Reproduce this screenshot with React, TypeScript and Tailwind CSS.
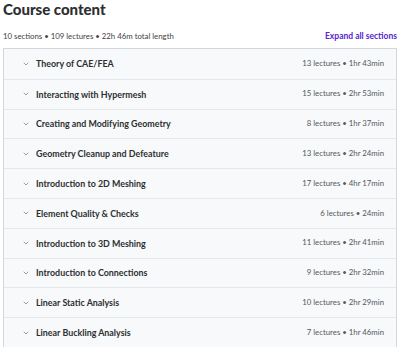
import { ChevronDown } from "lucide-react";

const sections = [
  { title: "Theory of CAE/FEA", info: "13 lectures • 1hr 43min" },
  { title: "Interacting with Hypermesh", info: "15 lectures • 2hr 53min" },
  { title: "Creating and Modifying Geometry", info: "8 lectures • 1hr 37min" },
  { title: "Geometry Cleanup and Defeature", info: "13 lectures • 2hr 24min" },
  { title: "Introduction to 2D Meshing", info: "17 lectures • 4hr 17min" },
  { title: "Element Quality & Checks", info: "6 lectures • 24min" },
  { title: "Introduction to 3D Meshing", info: "11 lectures • 2hr 41min" },
  { title: "Introduction to Connections", info: "9 lectures • 2hr 32min" },
  { title: "Linear Static Analysis", info: "10 lectures • 2hr 29min" },
  { title: "Linear Buckling Analysis", info: "7 lectures • 1hr 46min" },
];

const App = () => {
  return (
    <div className="w-[400px] h-[347px] overflow-hidden bg-white px-[3px] font-['Lato',sans-serif] text-[#2d2f31]">
      <h2 className="text-[15px] font-black leading-[18px] pt-[0px]">Course content</h2>
      <div className="flex items-end justify-between mt-[13px]">
        <span className="text-[7.8px] text-[#3e4143] leading-[11px]">
          10 sections • 109 lectures • 22h 46m total length
        </span>
        <span className="text-[8.5px] font-bold text-[#5624d0] leading-[11px]">Expand all sections</span>
      </div>
      <div className="mt-[6px] border border-[#d1d7dc]">
        {sections.map((s, i) => (
          <div
            key={s.title}
            className={
              "flex items-center justify-between bg-[#f7f9fa] h-[29.8px] pl-[18px] pr-[12px] " +
              (i > 0 ? "border-t border-[#e4e8eb]" : "")
            }
          >
            <div className="flex items-center gap-[6px]">
              <ChevronDown className="w-[8px] h-[8px] text-[#6a6f73]" strokeWidth={2} />
              <span className="text-[8.9px] font-bold">{s.title}</span>
            </div>
            <span className="text-[7.8px] text-[#54585c]">{s.info}</span>
          </div>
        ))}
      </div>
    </div>
  );
};

export default App;
